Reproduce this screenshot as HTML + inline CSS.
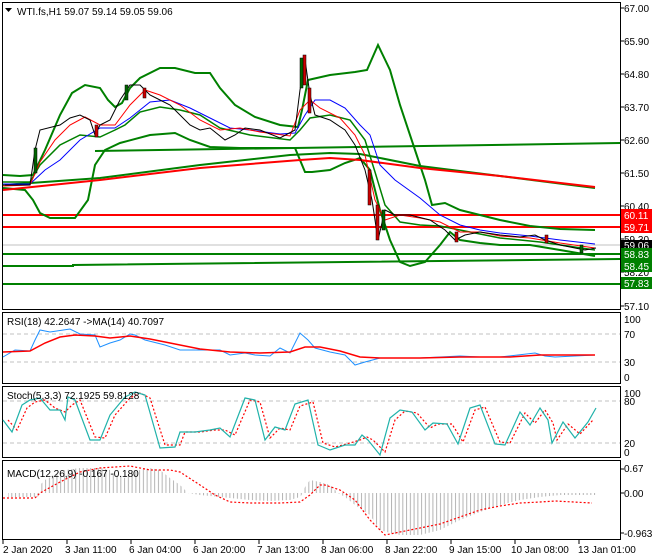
<!DOCTYPE html>
<html><head><meta charset="utf-8"><style>
html,body{margin:0;padding:0;background:#fff;}
svg{display:block;font-family:"Liberation Sans",sans-serif;font-size:10px;}
</style></head><body>
<svg width="660" height="560" viewBox="0 0 660 560" xmlns="http://www.w3.org/2000/svg">
<defs>
<pattern id="hist" width="3.76" height="10" patternUnits="userSpaceOnUse">
<rect x="0" y="0" width="1" height="10" fill="#b4b4b4"/>
</pattern>
</defs>
<rect width="660" height="560" fill="#fff"/>
<rect x="2.5" y="2.5" width="618" height="307" fill="none" stroke="#000"/>
<rect x="2.5" y="312.5" width="618" height="71" fill="none" stroke="#000"/>
<rect x="2.5" y="386.5" width="618" height="71" fill="none" stroke="#000"/>
<rect x="2.5" y="460.5" width="618" height="79" fill="none" stroke="#000"/>

<g fill="#000">
<text x="624" y="12">67.00</text>
<text x="624" y="45">65.90</text>
<text x="624" y="78">64.80</text>
<text x="624" y="111">63.70</text>
<text x="624" y="144">62.60</text>
<text x="624" y="177">61.50</text>
<text x="624" y="210">60.40</text>
<text x="624" y="243">59.30</text>
<text x="624" y="276">58.20</text>
<text x="624" y="310">57.10</text>
</g>
<g stroke="#000"><path d="M620 8h4M620 41h4M620 74h4M620 107h4M620 140h4M620 173h4M620 206h4M620 239h4M620 272h4M620 306h4"/></g>

<line x1="3" y1="245" x2="620" y2="245" stroke="#c0c0c0"/>
<line x1="3" y1="215" x2="620" y2="215" stroke="#f00" stroke-width="2"/>
<line x1="3" y1="227" x2="620" y2="227" stroke="#f00" stroke-width="2"/>
<g stroke="#008000" stroke-width="2" fill="none">
<line x1="3" y1="254" x2="620" y2="254"/>
<polyline points="3,266 73,266 73,265 620,259"/>
<line x1="3" y1="284" x2="620" y2="284"/>
<line x1="95" y1="151" x2="620" y2="143"/>
<polyline points="3,185 100,178 200,165 290,155 330,153 360,154 420,166 500,176 595,188"/>
<polyline points="3,175 20,176 33,175 45,150 60,115 72,93 85,85 100,88 108,100 115,107 122,103 130,88 140,78 160,68 175,68 195,73 210,73 220,88 235,105 255,117 280,125 298,127 302,110 308,80 330,75 355,72 367,70 378,45 390,70 400,105 415,150 425,180 432,205 445,203 460,210 480,215 500,220 530,226 560,229 595,230"/>
<polyline points="3,188 25,190 33,200 40,213 50,218 75,218 88,200 95,165 105,150 120,143 150,135 175,133 190,140 210,147 240,148 270,148 295,148 305,172 312,172 330,170 345,163 360,158 370,170 380,210 390,240 400,262 410,266 425,262 440,245 450,232 460,240 480,243 500,245 530,245 560,250 595,256"/>
<polyline points="3,182 30,182 40,165 60,145 80,135 100,137 115,130 125,125 140,112 160,107 180,110 200,115 220,128 250,135 290,140 300,130 310,118 330,115 350,120 365,140 375,172 385,205 400,222 420,225 440,226 470,232 500,238 540,242 595,250" stroke-width="1.5"/>
</g>
<polyline fill="none" stroke="#f00" stroke-width="2" points="3,190 100,180 200,168 300,160 330,158 360,160 420,168 500,176 595,187"/>
<polyline fill="none" stroke="#00f" stroke-width="1" points="3,184 30,184 45,170 60,160 80,140 100,128 115,128 130,118 150,102 170,100 190,108 210,118 230,128 250,130 280,134 295,133 305,115 315,100 330,100 345,108 360,125 370,135 380,165 395,180 420,198 440,215 460,225 480,230 500,233 530,236 560,240 595,244"/>
<polyline fill="none" stroke="#f00" stroke-width="1" points="3,186 30,185 40,162 55,140 70,125 85,117 100,125 115,125 130,105 145,90 160,95 180,105 200,120 220,130 240,128 260,132 290,136 300,110 310,100 320,108 340,118 355,135 365,155 375,200 385,220 400,215 420,218 440,222 460,232 480,232 500,236 530,238 560,243 595,248"/>
<polyline fill="none" stroke="#000" stroke-width="1" points="5,185 30,185 35,150 40,130 60,125 70,118 80,115 90,120 95,135 100,125 110,120 120,100 130,85 140,85 150,95 160,100 170,105 180,115 190,125 200,130 210,128 225,140 235,135 245,128 260,130 280,138 295,130 300,90 305,60 310,95 315,115 330,120 345,130 355,145 365,170 372,200 378,240 385,210 395,215 410,215 430,220 445,230 455,240 465,235 480,232 500,235 520,237 535,235 545,240 560,245 575,248 585,250 596,248"/>
<g fill="#c00" stroke="#000" stroke-width="0.5">
<rect x="303" y="55" width="3" height="30"/><rect x="308" y="88" width="3" height="25"/><rect x="368" y="170" width="3" height="35"/><rect x="376" y="205" width="3" height="35"/><rect x="143" y="88" width="3" height="10"/><rect x="95" y="125" width="3" height="12"/><rect x="455" y="232" width="3" height="10"/><rect x="545" y="235" width="3" height="8"/>
</g>
<g fill="#060" stroke="#000" stroke-width="0.5">
<rect x="300" y="58" width="3" height="30"/><rect x="34" y="148" width="3" height="25"/><rect x="125" y="85" width="3" height="15"/><rect x="382" y="210" width="3" height="20"/><rect x="580" y="245" width="3" height="8"/>
</g>

<rect x="621" y="209" width="31" height="12" fill="#f00"/><text x="624" y="219" fill="#fff">60.11</text>
<rect x="621" y="221" width="31" height="12" fill="#f00"/><text x="624" y="231" fill="#fff">59.71</text>
<rect x="621" y="240" width="31" height="10" fill="#000"/><text x="624" y="249" fill="#fff">59.06</text>
<rect x="621" y="248" width="31" height="12" fill="#008000"/><text x="624" y="258" fill="#fff">58.83</text>
<rect x="621" y="260" width="31" height="12" fill="#008000"/><text x="624" y="270" fill="#fff">58.45</text>
<rect x="621" y="277" width="31" height="12" fill="#008000"/><text x="624" y="287" fill="#fff">57.83</text>

<path d="M5 8h7l-3.5 4z" fill="#000"/>
<text x="17" y="15" fill="#000">WTI.fs,H1  59.07 59.14 59.05 59.06</text>

<g stroke="#c0c0c0" stroke-dasharray="4,3"><line x1="3" y1="334" x2="620" y2="334"/><line x1="3" y1="362" x2="620" y2="362"/></g>
<polyline fill="none" stroke="#1e90ff" points="3,357 15,350 30,351 35,340 40,330 50,332 70,329 80,334 95,335 100,347 110,343 120,340 130,334 135,335 145,340 165,345 180,350 200,350 220,350 230,355 245,353 255,355 270,356 280,348 290,353 300,333 308,340 315,348 330,352 345,355 355,365 365,362 380,358 400,358 420,358 440,357 460,356 480,357 500,357 535,353 545,356 555,357 575,356 595,355"/>
<polyline fill="none" stroke="#f00" stroke-width="1.5" points="3,352 30,351 45,343 60,337 75,335 95,336 110,338 130,336 150,339 170,343 200,349 230,352 260,353 290,352 305,347 320,347 340,351 360,357 380,358 420,358 460,357 510,357 540,355 595,355"/>
<text x="7" y="325">RSI(18) 42.2647  -&gt;MA(14) 40.7097</text>
<text x="624" y="323">100</text><text x="624" y="338">70</text><text x="624" y="366">30</text><text x="624" y="381">0</text>

<g stroke="#c0c0c0" stroke-dasharray="4,3"><line x1="3" y1="401" x2="620" y2="401"/><line x1="3" y1="443" x2="620" y2="443"/></g>
<polyline fill="none" stroke="#f00" stroke-dasharray="2,2" stroke-width="1.2" points="8,420 17,430 27,408 35,402 45,400 55,408 65,412 72,405 80,400 95,437 105,438 115,415 130,398 140,393 150,398 165,445 180,445 185,432 200,432 215,430 225,430 235,435 250,400 260,402 270,438 280,428 290,430 300,406 313,402 323,443 335,447 350,443 360,440 367,437 373,440 385,452 395,420 405,411 417,413 430,428 438,424 452,424 463,442 475,410 485,407 500,442 510,443 525,413 535,423 545,410 553,423 557,440 568,424 580,434 593,420"/>
<polyline fill="none" stroke="#20b2aa" stroke-width="1.2" points="3,420 12,432 22,405 30,400 40,398 50,410 60,410 65,420 68,397 75,400 90,440 100,440 110,415 125,397 135,392 145,395 160,448 175,447 180,432 195,432 210,430 220,428 230,437 245,398 255,400 265,440 275,427 285,430 295,404 308,400 318,445 330,450 345,445 355,445 362,435 368,440 380,455 390,418 400,410 412,412 425,430 433,423 447,424 458,444 470,408 480,405 495,444 505,445 520,412 530,425 540,408 548,420 552,443 563,422 575,438 588,422 596,408"/>
<text x="7" y="399">Stoch(5,3,3) 72.1925 59.8128</text>
<text x="624" y="397">100</text><text x="624" y="405">80</text><text x="624" y="447">20</text><text x="624" y="456">0</text>

<polygon fill="url(#hist)" points="8,493 8,497 38,497 40,485 45,480 55,475 65,470 80,468 100,468 110,470 115,475 125,478 130,473 140,470 150,468 160,470 170,478 180,485 188,493 200,495 220,497 240,499 250,500 270,501 290,500 300,497 303,493 305,487 310,480 320,482 330,485 338,493 345,497 355,505 370,515 380,530 390,533 400,535 420,535 440,530 460,520 480,512 500,505 520,500 540,497 560,495 596,495 596,493"/>
<polyline fill="none" stroke="#f00" stroke-dasharray="2,2" stroke-width="1.2" points="3,498 35,498 40,493 60,482 80,472 100,468 130,466 150,470 170,470 180,472 200,485 215,495 230,502 250,503 280,503 300,502 310,495 320,485 325,485 340,490 355,500 370,520 385,535 400,532 420,528 440,524 460,517 480,510 500,506 520,503 540,502 555,501 592,503"/>
<text x="7" y="477">MACD(12,26,9) -0.167 -0.180</text>
<text x="624" y="472">0.67</text><text x="624" y="497">0.00</text><text x="624" y="537">-0.963</text>
<g stroke="#000"><path d="M620 469h4M620 493h4M620 533h4"/></g>

<g stroke="#000"><path d="M3 540v4M67 540v4M131 540v4M195 540v4M259 540v4M323 540v4M387 540v4M451 540v4M515 540v4M579 540v4"/></g>
<g fill="#000">
<text x="3" y="553">2 Jan 2020</text>
<text x="65" y="553">3 Jan 11:00</text>
<text x="129" y="553">6 Jan 04:00</text>
<text x="193" y="553">6 Jan 20:00</text>
<text x="257" y="553">7 Jan 13:00</text>
<text x="321" y="553">8 Jan 06:00</text>
<text x="385" y="553">8 Jan 22:00</text>
<text x="449" y="553">9 Jan 15:00</text>
<text x="511" y="553">10 Jan 08:00</text>
<text x="578" y="553">13 Jan 01:00</text>
</g>
</svg>
</body></html>
